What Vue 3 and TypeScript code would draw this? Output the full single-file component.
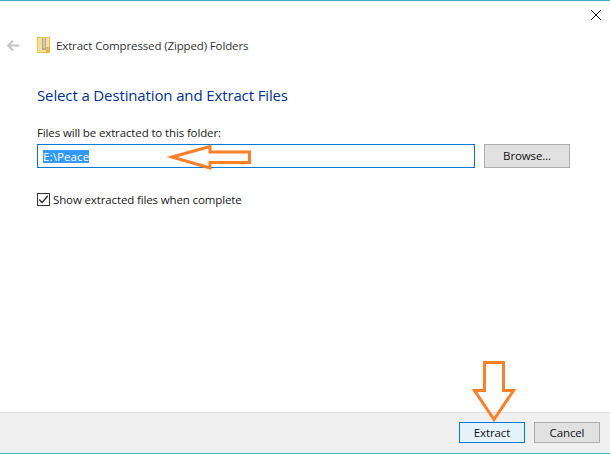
<script setup lang="ts">
const title = 'Extract Compressed (Zipped) Folders'
const heading = 'Select a Destination and Extract Files'
</script>

<template>
  <div class="window">
    <div class="titlebar">
      <svg class="close" width="10" height="10" viewBox="0 0 10 10">
        <path d="M0 0L10 10M10 0L0 10" stroke="#111" stroke-width="1" fill="none" />
      </svg>
    </div>
    <div class="nav">
      <svg class="back" width="12" height="11" viewBox="0 0 12 11">
        <path d="M6 .6L1.2 5.5L6 10.4M1.4 5.5H12" stroke="#c4c4c4" stroke-width="2" fill="none" />
      </svg>
      <svg class="zip" width="13" height="16" viewBox="0 0 13 16">
        <rect x=".5" y=".5" width="12" height="15" fill="#ffe08a" stroke="#e8c45c" />
        <rect x="5" y="1" width="4" height="12" fill="#a9a9a9" />
        <path d="M6 2h2M6 4h2M6 6h2M6 8h2M6 10h2" stroke="#eee" stroke-width="1" />
        <rect x="9" y="10" width="4" height="6" fill="#e8b93e" />
      </svg>
      <span class="title">{{ title }}</span>
    </div>
    <main class="content">
      <h1 class="heading">{{ heading }}</h1>
      <div class="label">Files will be extracted to this folder:</div>
      <div class="path-row">
        <div class="path-input"><span class="selected">E:\Peace</span></div>
        <button class="btn browse" type="button"><span class="browse-text">Browse...</span></button>
      </div>
      <div class="check-row">
        <span class="checkbox">
          <svg width="11" height="11" viewBox="0 0 11 11">
            <path d="M1.2 5.6L4 8.6L9.8 1.8" stroke="#333" stroke-width="1.4" fill="none" />
          </svg>
        </span>
        <span class="check-label">Show extracted files when complete</span>
      </div>
    </main>
    <footer class="footer">
      <button class="btn primary" type="button">Extract</button>
      <button class="btn" type="button">Cancel</button>
    </footer>
    <svg class="annotations" width="610" height="454" viewBox="0 0 610 454">
      <path d="M172 157L210 146.5V152H249.5V162.5H210V168Z" fill="none" stroke="#ff7f27" stroke-width="3" />
      <path d="M484.5 362.5H503.5V390.5H513.5L494 419.5L474.5 390.5H484.5Z" fill="none" stroke="#ff7f27" stroke-width="3" />
    </svg>
  </div>
</template>

<style>
html, body { margin: 0; padding: 0; background: #fff; }
</style>

<style scoped>
.window {
  position: relative;
  width: 610px;
  height: 454px;
  box-sizing: border-box;
  display: flex;
  flex-direction: column;
  background: #fff;
  border-top: 1px solid #3fb0c6;
  border-bottom: 1px solid #3fb0c6;
  overflow: hidden;
  font-family: "Open Sans", "Noto Sans", sans-serif;
  font-size: 11.5px;
  letter-spacing: -0.13px;
  color: #1a1a1a;
}
.titlebar {
  height: 28px;
  display: flex;
  justify-content: flex-end;
  align-items: flex-start;
  padding: 9px 9px 0 0;
  box-sizing: border-box;
}
.nav {
  height: 32px;
  display: flex;
  align-items: center;
  padding-left: 7px;
}
.back { margin-right: 18px; }
.zip { margin-right: 6px; }
.title { color: #333; }
.content {
  flex: 1;
  display: flex;
  flex-direction: column;
  padding: 0 40px 0 37px;
}
.heading {
  margin: 22px 0 0;
  font-size: 15px;
  font-weight: 400;
  line-height: 24px;
  color: #003399;
}
.label {
  margin-top: 18px;
  line-height: 16px;
}
.path-row {
  display: flex;
  gap: 9px;
  margin-top: 3px;
}
.path-input {
  width: 438px;
  height: 24px;
  box-sizing: border-box;
  border: 1px solid #0078d7;
  padding: 5px 0 0 5px;
  line-height: 13px;
}
.selected {
  display: inline-block;
  height: 13px;
  background: #3399ff;
  color: #fff;
  letter-spacing: 0.12px;
}
.btn {
  font: inherit;
  letter-spacing: inherit;
  color: #111;
  width: 66px;
  height: 21px;
  padding: 0;
  box-sizing: border-box;
  border: 1px solid #adadad;
  background: #e1e1e1;
}
.browse {
  width: 86px;
  height: 24px;
  padding-bottom: 2px;
}
.primary {
  border-color: #0078d7;
  background: #e5f1fb;
}
.check-row {
  display: flex;
  align-items: center;
  gap: 3px;
  margin-top: 24px;
}
.checkbox {
  width: 13px;
  height: 13px;
  box-sizing: border-box;
  border: 1px solid #333;
  display: flex;
  align-items: center;
  justify-content: center;
}
.footer {
  height: 41px;
  box-sizing: border-box;
  display: flex;
  justify-content: flex-end;
  gap: 9px;
  padding: 9px 10px 0 0;
  background: #f0f0f0;
  border-top: 1px solid #dfdfdf;
}
.annotations {
  position: absolute;
  left: 0;
  top: -1px;
  pointer-events: none;
}
</style>
